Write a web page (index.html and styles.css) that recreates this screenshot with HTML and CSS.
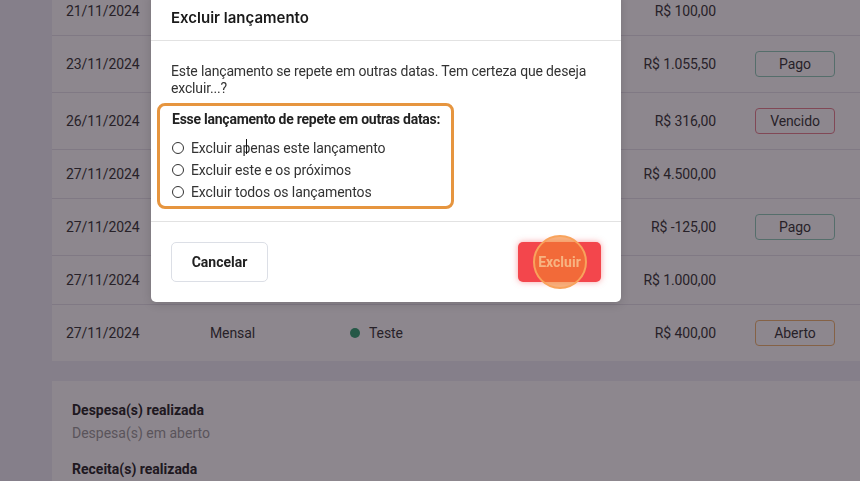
FILE: index.html
```html
<!DOCTYPE html>
<html lang="pt-BR">
<head>
    <meta charset="UTF-8">
    <meta name="viewport" content="width=device-width, initial-scale=1.0">
    <title>Lançamentos</title>
    <link rel="stylesheet" href="styles.css">
</head>
<body>

    <div class="page">
        <div class="card table">
            <div class="row">
                <span>21/11/2024</span><span></span><span></span>
                <span class="value">R$ 100,00</span><span></span>
            </div>
            <div class="row">
                <span>23/11/2024</span><span></span><span></span>
                <span class="value">R$ 1.055,50</span><span class="badge pago">Pago</span>
            </div>
            <div class="row">
                <span>26/11/2024</span><span></span><span></span>
                <span class="value">R$ 316,00</span><span class="badge vencido">Vencido</span>
            </div>
            <div class="row">
                <span>27/11/2024</span><span></span><span></span>
                <span class="value">R$ 4.500,00</span><span></span>
            </div>
            <div class="row">
                <span>27/11/2024</span><span></span><span></span>
                <span class="value">R$ -125,00</span><span class="badge pago">Pago</span>
            </div>
            <div class="row">
                <span>27/11/2024</span><span></span><span></span>
                <span class="value">R$ 1.000,00</span><span></span>
            </div>
            <div class="row">
                <span>27/11/2024</span><span>Mensal</span>
                <span class="category"><i class="dot"></i>Teste</span>
                <span class="value">R$ 400,00</span><span class="badge aberto">Aberto</span>
            </div>
        </div>

        <div class="card summary">
            <div class="summary-item">
                <strong>Despesa(s) realizada</strong>
                <span>Despesa(s) em aberto</span>
            </div>
            <div class="summary-item">
                <strong>Receita(s) realizada</strong>
            </div>
        </div>
    </div>

    <div class="overlay"></div>

    <div class="modal">
        <div class="modal-header">Excluir lançamento</div>
        <div class="modal-body">
            <p>Este lançamento se repete em outras datas. Tem certeza que deseja excluir...?</p>
            <div class="repeat-box">
                <div class="repeat-label">Esse lançamento de repete em outras datas:</div>
                <label class="option"><span class="radio"></span>Excluir apenas este lançamento</label>
                <label class="option"><span class="radio"></span>Excluir este e os próximos</label>
                <label class="option"><span class="radio"></span>Excluir todos os lançamentos</label>
            </div>
        </div>
        <div class="modal-footer">
            <button class="btn-cancel">Cancelar</button>
            <button class="btn-delete">Excluir<span class="click"></span></button>
        </div>
        <span class="text-cursor"></span>
    </div>

</body>
</html>
```

FILE: styles.css
```css
body {
    font-family: Roboto, "Liberation Sans", sans-serif;
    font-size: 14px;
    margin: 0;
    padding: 0;
    background: #efeff7;
    color: #333;
    overflow: hidden;
    height: 481px;
}

.page {
    margin-top: -13px;
    padding-left: 52px;
}

.card {
    background: white;
    width: 808px;
}

.row {
    display: grid;
    grid-template-columns: 144px 145px 201px 160px 119px;
    align-items: center;
    padding: 16px 14px;
    line-height: 16px;
    border-bottom: 1px solid #e4e3ea;
    letter-spacing: -0.1px;
}

.row:has(.badge) {
    padding: 15px 14px;
}

.row:last-child {
    border-bottom: none;
}

.value {
    text-align: right;
}

.category {
    display: flex;
    align-items: center;
    margin-left: -5px;
}

.dot {
    width: 10px;
    height: 10px;
    border-radius: 50%;
    background: #2fa071;
    margin-right: 9px;
}

.badge {
    justify-self: end;
    width: 80px;
    height: 26px;
    line-height: 24px;
    box-sizing: border-box;
    text-align: center;
    border: 1px solid #ccc;
    border-radius: 4px;
}

.badge.pago {
    border-color: #8fcdb9;
}

.badge.vencido {
    border-color: #e6808e;
}

.badge.aberto {
    border-color: #eeb46e;
}

.summary {
    margin-top: 20px;
    padding: 20px 20px 0;
    height: 88px;
}

.summary-item {
    display: flex;
    flex-direction: column;
    line-height: 18px;
    margin-bottom: 18px;
}

.summary-item:last-child {
    margin-bottom: 0;
}

.summary-item strong {
    color: #222;
}

.summary-item span {
    color: #999;
    margin-top: 5px;
}

.overlay {
    position: fixed;
    inset: 0;
    background: rgba(27, 15, 29, 0.5);
}

.modal {
    position: absolute;
    left: 151px;
    top: -8px;
    width: 470px;
    background: white;
    border-radius: 5px;
    box-shadow: 0 2px 10px rgba(0, 0, 0, 0.15);
}

.modal-header {
    font-family: Inter, Roboto, sans-serif;
    font-weight: 600;
    font-size: 15px;
    color: #1a1a1a;
    padding: 17px 20px 13px;
    line-height: 18px;
    border-bottom: 1px solid #e2e2e2;
}

.modal-body {
    padding: 22px 20px 12px;
}

.modal-body p {
    margin: 0;
    line-height: 17px;
    letter-spacing: -0.15px;
}

.repeat-box {
    margin: 6px 0 0 -14px;
    width: 279px;
    padding: 5px 0 3px 12px;
    border: 3px solid #e6953f;
    border-radius: 8px;
}

.repeat-label {
    font-weight: 700;
    line-height: 17px;
    margin-bottom: 9px;
    color: #222;
    letter-spacing: -0.25px;
}

.option {
    display: flex;
    align-items: center;
    line-height: 22px;
    letter-spacing: -0.1px;
}

.radio {
    width: 10px;
    height: 10px;
    border: 1.3px solid #333;
    border-radius: 50%;
    margin-right: 7px;
}

.modal-footer {
    display: flex;
    justify-content: space-between;
    padding: 20px 20px;
    border-top: 1px solid #e2e2e2;
}

.modal-footer button {
    height: 40px;
    font-family: Roboto, sans-serif;
    font-size: 14px;
    font-weight: 700;
    border-radius: 5px;
    cursor: pointer;
}

.btn-cancel {
    width: 97px;
    background: white;
    color: #222;
    border: 1px solid #dcdfe6;
}

.btn-delete {
    position: relative;
    width: 83px;
    background: #f3464c;
    color: white;
    border: none;
    box-shadow: 0 0 6px rgba(243, 70, 76, 0.5);
}

.click {
    position: absolute;
    left: 15px;
    top: -7px;
    width: 50px;
    height: 50px;
    border-radius: 50%;
    background: rgba(242, 130, 45, 0.6);
    border: 2px solid #f8a35c;
}

.text-cursor {
    position: absolute;
    left: 95px;
    top: 147px;
    width: 1px;
    height: 15px;
    background: #111;
}
```
